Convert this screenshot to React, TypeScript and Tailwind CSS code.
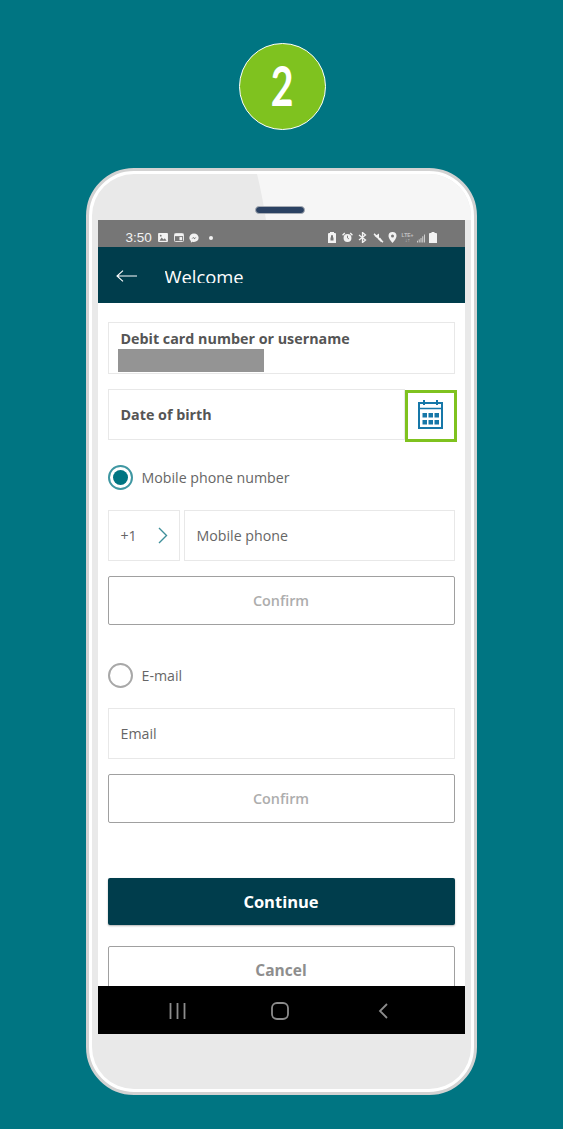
import React from "react";

const sans = "font-['Open_Sans',sans-serif]";

function Field({ className = "", children }: { className?: string; children?: React.ReactNode }) {
  return <div className={`border border-[#e8e8e8] bg-white ${className}`}>{children}</div>;
}

function Radio({ on, label, className = "" }: { on?: boolean; label: string; className?: string }) {
  return (
    <div className={`flex items-center ${className}`}>
      <div className={`flex h-[25px] w-[25px] items-center justify-center rounded-full border-2 ${on ? "border-[#3f97a2]" : "border-[#a8a8a8]"}`}>
        {on && <div className="h-[15px] w-[15px] rounded-full bg-[#007582]" />}
      </div>
      <span className="ml-[9px] text-[14.200px] text-[#666]">{label}</span>
    </div>
  );
}

function Confirm({ className = "" }: { className?: string }) {
  return (
    <div className={`flex h-[49px] items-center justify-center rounded-[2px] border border-[#a0a0a0] text-[14.400px] font-semibold text-[#adadad] ${className}`}>
      Confirm
    </div>
  );
}

function StatusLeft() {
  return (
    <div className="flex items-center">
      <span className="font-['Liberation_Sans',sans-serif] text-[13.500px] leading-none text-[#f2f2f2]">3:50</span>
      <svg className="ml-[6px]" width="10" height="9" viewBox="0 0 11 10">
        <rect width="11" height="10" rx="1" fill="#f2f2f2" />
        <path d="M1.500 8.500 4 5l2 2.200L7.500 5.800l2 2.700z" fill="#767676" />
        <circle cx="3" cy="3" r="1" fill="#767676" />
      </svg>
      <svg className="ml-[6px]" width="10" height="9" viewBox="0 0 11 10">
        <rect x=".5" y=".5" width="10" height="9" rx="1" fill="none" stroke="#f2f2f2" />
        <rect x="1" y="1" width="9" height="2.500" fill="#f2f2f2" />
        <rect x="6" y="4.500" width="3" height="3.500" fill="#f2f2f2" />
      </svg>
      <svg className="ml-[5px]" width="10" height="10" viewBox="0 0 11 11">
        <path d="M5.500.5C2.500.5.400 2.600.400 5.300c0 1.500.6 2.700 1.700 3.600v1.700l1.600-.9c.5.2 1.100.2 1.800.2 3 0 5.100-2 5.100-4.600S8.500.5 5.500.5z" fill="#f2f2f2" />
        <path d="M2.500 6.800 4.700 4.300l1.300 1.200 2.300-1.200-2.200 2.500-1.300-1.200z" fill="#767676" />
      </svg>
      <div className="ml-[10px] h-[4px] w-[4px] rounded-full bg-[#f2f2f2]" />
    </div>
  );
}

function StatusRight() {
  return (
    <div className="flex items-center">
      <svg width="8" height="11" viewBox="0 0 8 11">
        <path d="M2 0h4v1h1a1 1 0 0 1 1 1v9H0V2a1 1 0 0 1 1-1h1z" fill="#f2f2f2" />
        <path d="M2.500 5.500h3v3h-3zM3 5.500V4a1 1 0 0 1 2 0v1.500" fill="#767676" />
      </svg>
      <svg className="ml-[6px]" width="11" height="11" viewBox="0 0 12 11">
        <circle cx="6" cy="6" r="4.300" fill="#f2f2f2" />
        <path d="M6 3.500V6l1.500 1" stroke="#767676" fill="none" />
        <path d="M.6 3 3 .7M11.400 3 9 .7" stroke="#f2f2f2" strokeWidth="1.500" />
      </svg>
      <svg className="ml-[5px]" width="9" height="11" viewBox="0 0 9 11">
        <path d="M1 3l6.500 5L4.500 10.500V.5L7.500 3 1 8" fill="none" stroke="#f2f2f2" strokeWidth="1.300" />
      </svg>
      <svg className="ml-[6px]" width="11" height="10" viewBox="0 0 11 10">
        <path d="M1 2.500h2L6 .5v6z" fill="#f2f2f2" />
        <path d="M1 .8 10 9.200" stroke="#f2f2f2" strokeWidth="1.500" />
        <path d="M5 6l3 3 1.500-1L7 4.500z" fill="#f2f2f2" />
      </svg>
      <svg className="ml-[4px]" width="9" height="11" viewBox="0 0 9 11">
        <path fillRule="evenodd" d="M4.500 0a4 4 0 0 1 4 4c0 2.800-4 7-4 7S.5 6.800.5 4a4 4 0 0 1 4-4zm0 2.500a1.500 1.500 0 1 0 0 3 1.500 1.500 0 0 0 0-3z" fill="#f2f2f2" />
      </svg>
      <div className="ml-[5px] flex w-[12px] flex-col items-center font-['Liberation_Sans',sans-serif] text-[5px] font-bold leading-[5px] text-[#c4c4c4]">
        <span>LTE+</span>
        <span>↓↑</span>
      </div>
      <svg className="ml-[3px] mt-[2px]" width="8" height="9" viewBox="0 0 9 9">
        <path d="M.5 9V7M2.500 9V5.500M4.500 9V4M6.500 9V2M8.500 9V0" stroke="#e0e0e0" strokeWidth="1" />
      </svg>
      <svg className="ml-[4px]" width="8" height="11" viewBox="0 0 8 11">
        <path d="M2.500 0h3v1H7a1 1 0 0 1 1 1v9H0V2a1 1 0 0 1 1-1h1.500z" fill="#f2f2f2" />
      </svg>
    </div>
  );
}

export default function App() {
  return (
    <div className={`flex h-[1129px] w-[563px] flex-col items-center overflow-hidden bg-[#007582] ${sans}`}>
      <div className="ml-[1px] mt-[43px] flex h-[87px] w-[87px] items-center justify-center rounded-full border border-white bg-[#7fc21f]">
        <span className="mb-[4px] inline-block origin-center scale-x-[0.7] font-['Lato',sans-serif] text-[56px] font-bold leading-none text-white">2</span>
      </div>

      <div className="relative mt-[38px] ml-[-1px] h-[927px] w-[391px] overflow-hidden rounded-[48px] border-[3px] border-[#d2d2d2] bg-white p-[3px]">
        <div className="relative flex h-full flex-col items-center overflow-hidden rounded-[42px] bg-[#e9e9e9]">
          <svg className="absolute left-0 top-0" width="379" height="50" viewBox="0 0 379 50">
            <path d="M165 0H379V46H174Q170 20 165 0z" fill="#f6f6f6" />
          </svg>
          <div className="relative ml-[-3px] mt-[32px] h-[8px] w-[50px] rounded-full border border-[#a8adb5] bg-[#2c4263]" />
          <div className="relative mt-[6px] flex h-[814px] w-[367px] flex-col overflow-hidden bg-white">
            <div className="flex h-[27px] shrink-0 items-center justify-between bg-[#767676] pl-[28px] pr-[28px] pt-[8px]">
              <StatusLeft />
              <StatusRight />
            </div>
            <div className="flex h-[56px] shrink-0 items-center bg-[#003d4c] pl-[18px]">
              <svg className="mt-[2px]" width="21" height="12" viewBox="0 0 21 12">
                <path d="M21 6H1M7 .7 1 6l6 5.300" fill="none" stroke="#fff" strokeWidth="1.100" />
              </svg>
              <div className="ml-[28px] mt-[1px] h-[15px] overflow-hidden text-[18.400px] font-normal leading-[17px] text-white">Welcome</div>
            </div>

            <div className="flex min-h-0 flex-1 flex-col overflow-hidden px-[10px] text-[#555]">
              <Field className="relative mt-[19px] h-[52px] shrink-0 pl-[12px] pt-[6px]">
                <div className="text-[14.300px] font-bold leading-[19px] text-[#555]">Debit card number or username</div>
                <div className="ml-[-3px] mt-[1px] h-[23px] w-[146px] bg-[#949494]" />
              </Field>

              <div className="mt-[15px] flex h-[53px] shrink-0 items-start">
                <Field className="flex h-[51px] w-[297px] shrink-0 items-center pl-[12px] text-[14.300px] font-bold text-[#555]">Date of birth</Field>
                <div className="mt-[1px] flex h-[52px] w-[52px] shrink-0 items-center justify-center border-[3px] border-[#7fc21f] bg-white">
                  <svg className="mb-[4px]" width="25" height="29" viewBox="0 0 25 29">
                    <path d="M6 0v5M19 0v5" stroke="#1677a8" strokeWidth="2" />
                    <rect x="1" y="3" width="23" height="25" fill="none" stroke="#1677a8" strokeWidth="2" />
                    <path d="M1 8.500h23" stroke="#1677a8" strokeWidth="1.500" />
                    <path d="M4.500 13h4.500v4.500H4.500zM10.500 13h4.500v4.500h-4.500zM16.500 13h4.500v4.500h-4.500zM4.500 20h4.500v4.500H4.500zM10.500 20h4.500v4.500h-4.500zM16.500 20h4.500v4.500h-4.500z" fill="#1677a8" />
                  </svg>
                </div>
              </div>

              <Radio on label="Mobile phone number" className="mt-[23px] shrink-0" />

              <div className="mt-[20px] flex h-[51px] shrink-0 gap-[4px]">
                <Field className="flex w-[72px] items-center justify-between pl-[12px] pr-[11px] text-[14.200px] text-[#666]">
                  <span>+1</span>
                  <svg width="10" height="17" viewBox="0 0 10 17">
                    <path d="M1 1l7.500 7.500L1 16" fill="none" stroke="#3f8f9a" strokeWidth="1.400" />
                  </svg>
                </Field>
                <Field className="flex flex-1 items-center pl-[12px] text-[14.200px] text-[#666]">Mobile phone</Field>
              </div>

              <Confirm className="mt-[15px] shrink-0" />

              <Radio label="E-mail" className="mt-[38px] shrink-0" />

              <Field className="mt-[20px] flex h-[51px] shrink-0 items-center pl-[12px] text-[14.200px] text-[#666]">Email</Field>

              <Confirm className="mt-[15px] shrink-0" />

              <div className="mt-[55px] flex h-[47px] shrink-0 items-center justify-center rounded-[2px] bg-[#003d4c] pt-[1px] text-[16.500px] font-bold text-white shadow-[0_1px_2px_rgba(0,0,0,0.3)]">
                Continue
              </div>

              <div className="mt-[21px] flex h-[49px] shrink-0 items-center justify-center rounded-[2px] border border-[#a0a0a0] text-[15.500px] font-bold text-[#8e8e8e]">
                Cancel
              </div>
            </div>

            <div className="flex h-[48px] shrink-0 items-center bg-black pl-[71px] pt-[2px]">
              <svg width="17" height="16" viewBox="0 0 17 16">
                <path d="M1.500 0v16M8.500 0v16M15.500 0v16" stroke="#8c8c8c" strokeWidth="1.800" />
              </svg>
              <svg className="ml-[85px]" width="18" height="18" viewBox="0 0 18 18">
                <rect x="1" y="1" width="16" height="16" rx="5" fill="none" stroke="#8c8c8c" strokeWidth="1.800" />
              </svg>
              <svg className="ml-[89px]" width="10" height="16" viewBox="0 0 10 16">
                <path d="M9 1 2 8l7 7" fill="none" stroke="#8c8c8c" strokeWidth="1.800" />
              </svg>
            </div>
          </div>
        </div>
      </div>
    </div>
  );
}
